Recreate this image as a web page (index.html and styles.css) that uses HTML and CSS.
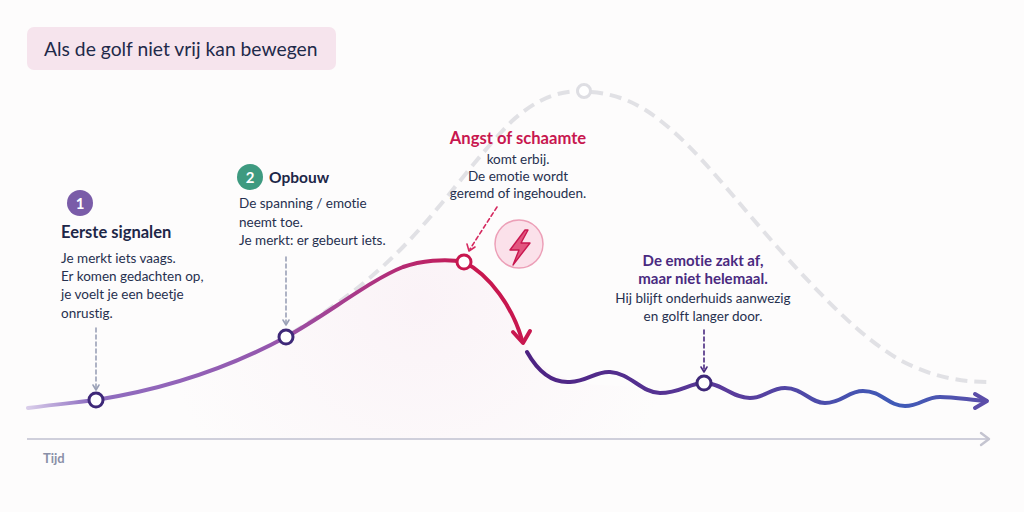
FILE: index.html
```html
<!DOCTYPE html>
<html lang="nl">
<head>
<meta charset="utf-8">
<title>Als de golf niet vrij kan bewegen</title>
<link rel="stylesheet" href="styles.css">
</head>
<body>
<div class="stage">
  <header class="title">Als de golf niet vrij kan bewegen</header>

  <div class="canvas">
    <svg class="chart" width="1024" height="512" viewBox="0 0 1024 512" xmlns="http://www.w3.org/2000/svg">
      <defs>
        <linearGradient id="rise" gradientUnits="userSpaceOnUse" x1="28" y1="0" x2="464" y2="0">
          <stop offset="0" stop-color="#d9cdea"/>
          <stop offset="0.14" stop-color="#8f6fc1"/>
          <stop offset="0.55" stop-color="#9457ae"/>
          <stop offset="0.82" stop-color="#b12f7c"/>
          <stop offset="1" stop-color="#c41a55"/>
        </linearGradient>
        <linearGradient id="wave" gradientUnits="userSpaceOnUse" x1="527" y1="0" x2="990" y2="0">
          <stop offset="0" stop-color="#4d2282"/>
          <stop offset="0.45" stop-color="#5a3c9c"/>
          <stop offset="0.8" stop-color="#3f5bb8"/>
          <stop offset="1" stop-color="#5b4da8"/>
        </linearGradient>
        <radialGradient id="under" gradientUnits="userSpaceOnUse" cx="420" cy="300" r="260">
          <stop offset="0" stop-color="#f5dfec" stop-opacity="0.32"/>
          <stop offset="0.6" stop-color="#f5dfec" stop-opacity="0.12"/>
          <stop offset="1" stop-color="#f5dfec" stop-opacity="0"/>
        </radialGradient>
      </defs>

      <!-- soft fill under the curve -->
      <path d="M28,408 C60,404 80,402 96,400 C160,390 225,370 286,337 C325,316 370,280 403,267 C420,261 445,258 464,262 C490,275 515,310 523,340 C535,365 560,383 600,385 L700,390 L700,439 L28,439 Z" fill="url(#under)"/>

      <!-- axis -->
      <line x1="27" y1="439" x2="988" y2="439" stroke="#cfcfdb" stroke-width="2"/>
      <path d="M981,433 L989,439 L981,445" fill="none" stroke="#c4c4d0" stroke-width="2.4" stroke-linecap="round" stroke-linejoin="round"/>

      <!-- natural (blocked) wave, dashed grey -->
      <path d="M292,333 C330,310 365,285 400,250 C440,210 475,158 512,121 C535,100 556,92 577,91" fill="none" stroke="#e1e1e5" stroke-width="4" stroke-dasharray="12 7"/>
      <path d="M591,92 C618,94 640,104 662,122 C700,152 735,200 780,250 C825,300 862,338 900,360 C932,377 960,382 990,382" fill="none" stroke="#e1e1e5" stroke-width="4" stroke-dasharray="12 7"/>
      <circle cx="584" cy="91" r="6.5" fill="#fff" stroke="#dedee3" stroke-width="3"/>

      <!-- rising curve -->
      <path d="M28,408 C60,404 80,402 96,400 C160,390 225,370 286,337 C325,316 370,280 403,267 C420,261 445,258 464,262" fill="none" stroke="url(#rise)" stroke-width="4" stroke-linecap="round"/>

      <!-- drop -->
      <path d="M464,262 C490,275 513,308 522,340" fill="none" stroke="#c8174f" stroke-width="4" stroke-linecap="round"/>
      <path d="M513,332 L523,343 L530,331" fill="none" stroke="#c8174f" stroke-width="4" stroke-linecap="round" stroke-linejoin="round"/>

      <!-- lingering wave -->
      <path d="M527,352 C540,375 555,383 570,382 C588,381 596,371 610,372 C630,373 642,393 660,393 C680,393 690,383 704,383 C722,383 732,398 750,398 C765,398 770,388 785,388 C803,388 810,403 825,403 C842,403 848,391 863,391 C882,391 888,406 905,406 C920,406 925,397 940,397 C955,397 970,400 986,401" fill="none" stroke="url(#wave)" stroke-width="4" stroke-linecap="round"/>
      <path d="M975,394 L987,401 L975,408" fill="none" stroke="#5b4da8" stroke-width="4" stroke-linecap="round" stroke-linejoin="round"/>

      <!-- pointer arrows -->
      <g stroke-width="1.6" fill="none" stroke-linecap="round" stroke-linejoin="round">
        <path d="M96,328 L96,389" stroke="#9aa0b6" stroke-dasharray="4 3"/>
        <path d="M93,385 L96,390 L99,385" stroke="#9aa0b6"/>
        <path d="M286,257 L286,324" stroke="#9aa0b6" stroke-dasharray="4 3"/>
        <path d="M283,320 L286,325 L289,320" stroke="#9aa0b6"/>
        <path d="M497,207 L470,249" stroke="#d52a60" stroke-dasharray="4 3"/>
        <path d="M467,244 L469,251 L475,247" stroke="#d52a60"/>
        <path d="M704,330 L704,371" stroke="#4a2a80" stroke-dasharray="4 3"/>
        <path d="M701,367 L704,372 L707,367" stroke="#4a2a80"/>
      </g>

      <!-- points -->
      <circle cx="96" cy="400" r="7" fill="#fff" stroke="#3e2878" stroke-width="3"/>
      <circle cx="286" cy="337" r="7" fill="#fff" stroke="#3e2878" stroke-width="3"/>
      <circle cx="464" cy="262" r="7" fill="#fff" stroke="#c8174f" stroke-width="3"/>
      <circle cx="704" cy="383" r="7" fill="#fff" stroke="#3e2878" stroke-width="3"/>

      <!-- lightning badge -->
      <circle cx="519" cy="244" r="24" fill="#fbe1ea" stroke="#ec9fb7" stroke-width="1.5"/>
      <path d="M525,230 L510,250 L519,250 L513,265 L530,243 L521,243 L528,230 Z" fill="#e2567f" stroke="#c8174f" stroke-width="1.4" stroke-linejoin="round"/>
    </svg>

    <div class="note note-1">
      <span class="badge badge-purple">1</span>
      <h2 class="note-head">Eerste signalen</h2>
      <p class="note-body">Je merkt iets vaags.<br>Er komen gedachten op,<br>je voelt je een beetje<br>onrustig.</p>
    </div>

    <div class="note note-2">
      <div class="note-row">
        <span class="badge badge-green">2</span>
        <h2 class="note-head">Opbouw</h2>
      </div>
      <p class="note-body">De spanning / emotie<br>neemt toe.<br>Je merkt: er gebeurt iets.</p>
    </div>

    <div class="note note-3">
      <h2 class="note-head head-red">Angst of schaamte</h2>
      <p class="note-body body-tight">komt erbij.<br>De emotie wordt<br>geremd of ingehouden.</p>
    </div>

    <div class="note note-4">
      <h2 class="note-head head-purple">De emotie zakt af,<br>maar niet helemaal.</h2>
      <p class="note-body">Hij blijft onderhuids aanwezig<br>en golft langer door.</p>
    </div>

    <span class="axis-label">Tijd</span>
  </div>
</div>
</body>
</html>
```

FILE: styles.css
```css
* { box-sizing: border-box; }

html, body {
  margin: 0;
  padding: 0;
  background: #fdfcfc;
}

body {
  font-family: Lato, "Open Sans", "Liberation Sans", sans-serif;
  font-variant-ligatures: none;
  color: #1f2a4a;
}

.stage {
  position: relative;
  width: 1024px;
  height: 512px;
  overflow: hidden;
  padding: 27px 0 0 27px;
}

.title {
  position: relative;
  z-index: 2;
  display: inline-block;
  height: 43px;
  line-height: 43px;
  padding: 0 19px 0 17px;
  background: #f6e4ed;
  border-radius: 7px;
  font-size: 19.3px;
  color: #1f2a4a;
}

.canvas {
  position: absolute;
  inset: 0;
}

.chart {
  display: block;
}

.note {
  position: absolute;
}

.note-head {
  margin: 0;
  font-size: 15.5px;
  line-height: 20px;
  font-weight: 700;
  color: #1d2748;
}

.note-body {
  margin: 7px 0 0;
  font-size: 13.5px;
  line-height: 18.2px;
  color: #26304f;
}

.badge {
  display: flex;
  align-items: center;
  justify-content: center;
  width: 26px;
  height: 26px;
  border-radius: 50%;
  color: #fff;
  font-weight: 700;
  font-size: 15px;
}

.badge-purple { background: #7a5ca8; }
.badge-green { background: #3e9a80; }

.note-1 {
  left: 67px;
  top: 190px;
}
.note-1 .note-head { margin: 6px 0 0 -6px; font-size: 16.5px; }
.note-1 .note-body { margin-left: -6px; }

.note-2 {
  left: 239px;
  top: 164px;
}
.note-row {
  display: flex;
  align-items: center;
  gap: 6px;
  margin-left: -2px;
}
.note-2 .note-body { margin-top: 4px; line-height: 18.5px; }

.note-3 {
  left: 418px;
  top: 128px;
  width: 200px;
  text-align: center;
}
.head-red { color: #c8174f; font-size: 16.6px; }
.body-tight { margin-top: 3px; line-height: 17px; }

.note-4 {
  left: 593px;
  top: 252px;
  width: 220px;
  text-align: center;
}
.head-purple {
  color: #4a2a80;
  font-size: 15px;
  line-height: 17.5px;
}
.note-4 .note-body { margin-top: 2px; }

.axis-label {
  position: absolute;
  left: 43px;
  top: 450px;
  font-size: 13px;
  font-weight: 700;
  color: #8a90a8;
}
```
